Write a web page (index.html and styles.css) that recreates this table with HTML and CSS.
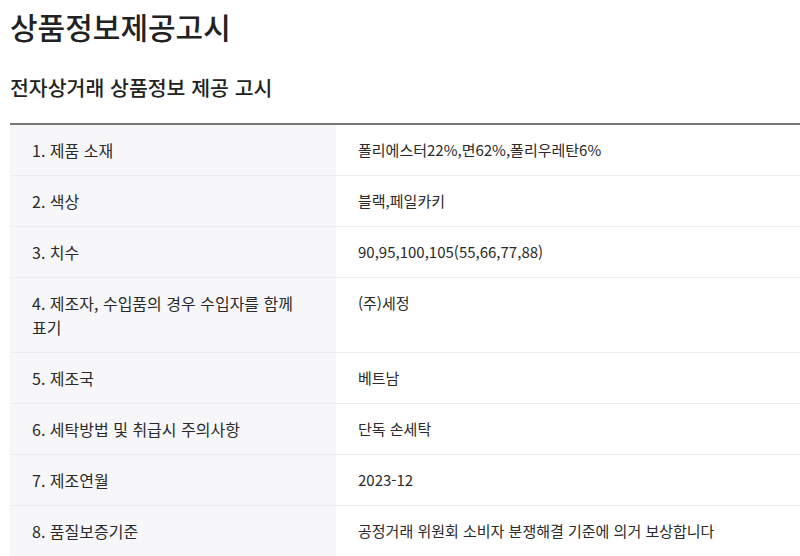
FILE: index.html
```html
<!DOCTYPE html>
<html lang="ko">
<head>
<meta charset="utf-8">
<link rel="stylesheet" href="styles.css">
</head>
<body>
<div class="page">
  <h1 class="title">상품정보제공고시</h1>
  <h2 class="subtitle">전자상거래 상품정보 제공 고시</h2>
  <table class="info">
    <tbody>
      <tr><th>1. 제품 소재</th><td>폴리에스터22%,면62%,폴리우레탄6%</td></tr>
      <tr><th>2. 색상</th><td>블랙,페일카키</td></tr>
      <tr><th>3. 치수</th><td>90,95,100,105(55,66,77,88)</td></tr>
      <tr><th>4. 제조자, 수입품의 경우 수입자를 함께 표기</th><td>(주)세정</td></tr>
      <tr><th>5. 제조국</th><td>베트남</td></tr>
      <tr><th>6. 세탁방법 및 취급시 주의사항</th><td>단독 손세탁</td></tr>
      <tr><th>7. 제조연월</th><td>2023-12</td></tr>
      <tr><th>8. 품질보증기준</th><td>공정거래 위원회 소비자 분쟁해결 기준에 의거 보상합니다</td></tr>
    </tbody>
  </table>
</div>
</body>
</html>
```
FILE: styles.css
```css
html, body {
  margin: 0;
  padding: 0;
  background: #fff;
}
body {
  font-family: "Noto Sans CJK KR", "Noto Sans", sans-serif;
  color: #333;
}
.page {
  padding: 0 0 0 10px;
}
.title {
  margin: 0;
  padding-top: 6px;
  font-size: 30px;
  line-height: 40px;
  font-weight: 500;
  color: #222;
}
.subtitle {
  margin: 27px 0 0;
  font-size: 20.5px;
  line-height: 28px;
  font-weight: 500;
  color: #222;
}
.info {
  margin-top: 22px;
  width: calc(100% + 40px);
  table-layout: fixed;
  border-collapse: collapse;
  border-top: 2px solid #777;
  line-height: 24px;
  word-break: keep-all;
}
.info th, .info td {
  padding: 13px 22px;
  border-bottom: 1px solid #ececec;
  text-align: left;
  vertical-align: top;
  font-weight: 400;
}
.info th {
  width: 282px;
  font-size: 16px;
  background: #f7f7fa;
  color: #2a2a2a;
}
.info td {
  font-size: 15px;
  background: #fff;
  color: #2a2a2a;
}
```
